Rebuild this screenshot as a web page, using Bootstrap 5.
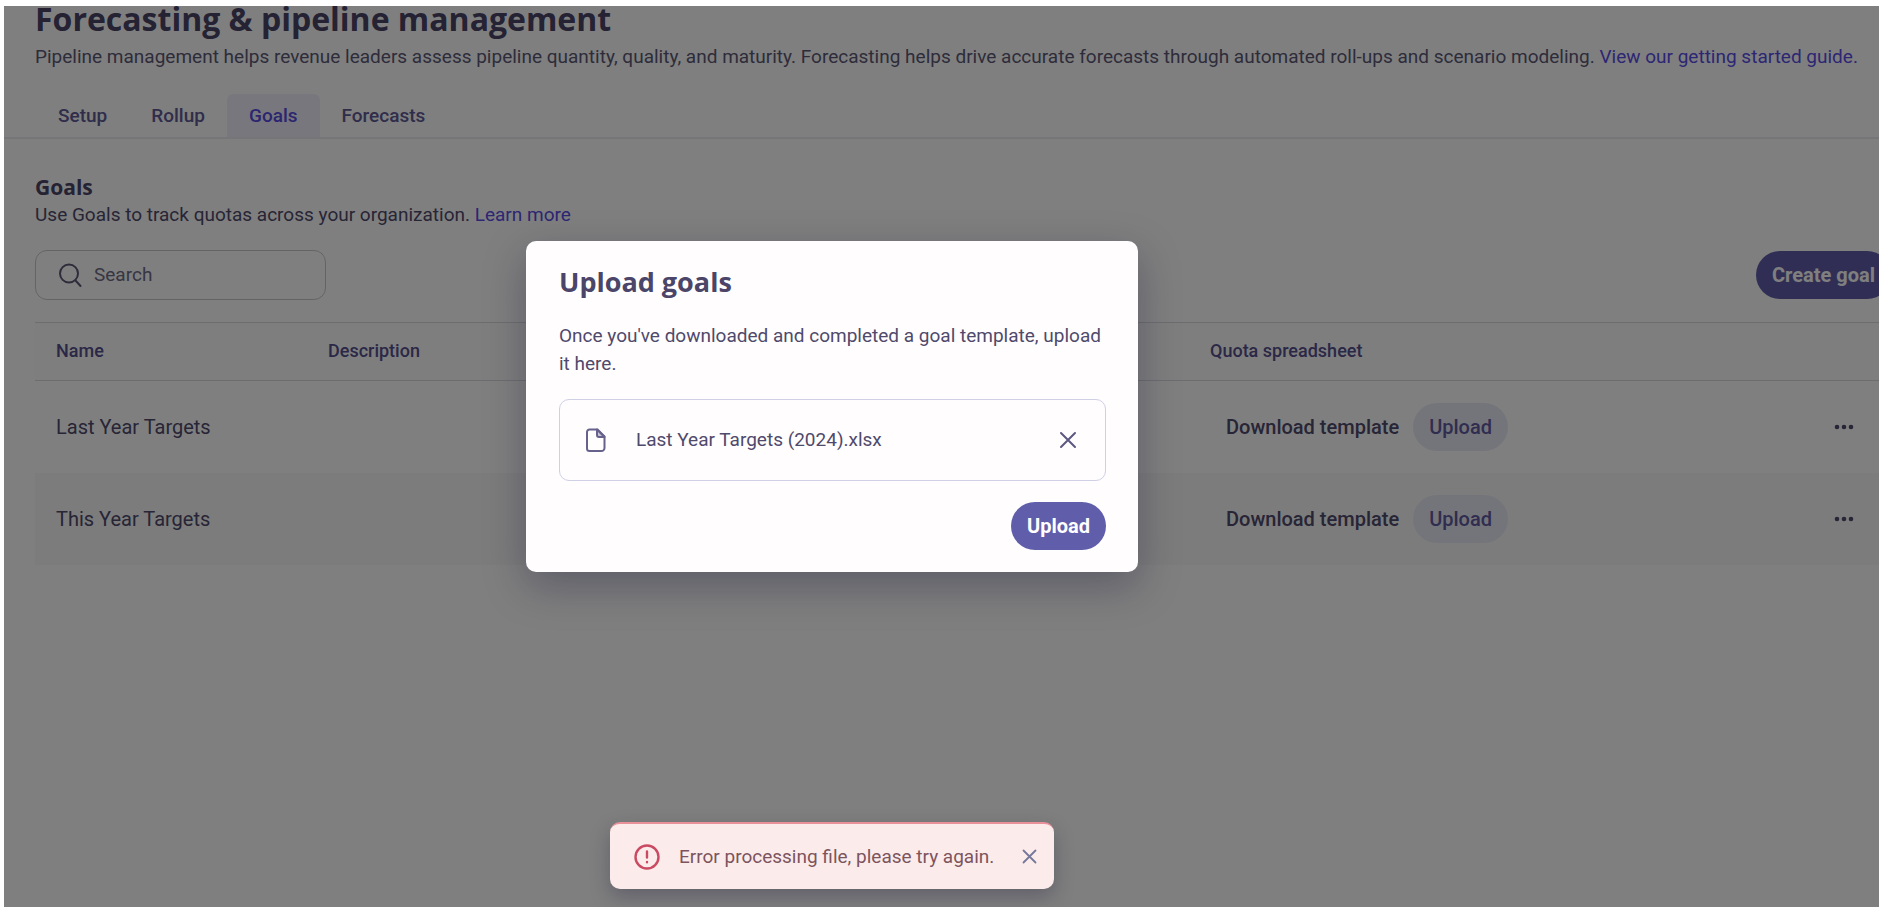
<!DOCTYPE html>
<html lang="en">
<head>
<meta charset="utf-8">
<meta name="viewport" content="width=device-width, initial-scale=1">
<title>Forecasting &amp; pipeline management</title>
<link href="https://cdn.jsdelivr.net/npm/bootstrap@5.3.0/dist/css/bootstrap.min.css" rel="stylesheet">
<style>
  :root { --ink: #4f4a6c; --brand: #605daa; --link: #5a4de8; }
  body { font-family: Roboto, "Liberation Sans", sans-serif; font-size: 19px; line-height: 28px; color: var(--ink); background: #fff; padding: 6px 3px 3px 4px; }
  h1, h2, h3 { font-family: "Open Sans", "Noto Sans", sans-serif; font-weight: 700; color: #4a4569; }
  a { color: var(--link); text-decoration: none; }
  .app-frame { background: #fff; }
  /* the page is a little wider than the visible frame */
  .app-canvas { width: calc(100% + 12px); }
  .gutter { padding-left: 31px; }
  .page-title { font-size: 32px; line-height: 25px; margin-bottom: 12px; }
  .page-lead { color: #5c5976; margin-bottom: 23px; }
  .tabs-bar { border-bottom: 2px solid #eceaf0; padding-left: 32px; }
  .tabs-bar .nav-link { font-size: 19px; line-height: 27px; font-weight: 500; color: #605a96; padding: 8px 22px; border-radius: 6px 6px 0 0; }
  .tabs-bar .nav-link.active { color: #594be0; background: #f1effc; }
  .goals-panel { padding-top: 34px; }
  .section-title { font-size: 21px; line-height: 28px; }
  .toolbar { margin: 21px 0 22px; }
  .search-box { width: 291px; border: 1px solid #c9c8cf; border-radius: 12px; padding: 0 21px; height: 50px; gap: 11px; }
  .search-box input { font-size: 19px; color: var(--ink); background: transparent; }
  .search-box input::placeholder { color: #6f6c86; opacity: 1; }
  .pill { font-size: 20px; line-height: 28px; font-weight: 500; border: 0; border-radius: 24px; padding: 10px 16px; }
  .pill-solid { background: var(--brand); color: #fff; font-weight: 700; }
  .pill-solid:hover { background: #524f98; color: #fff; }
  .pill-soft { background: #e9eaf5; color: #605aa0; }
  .goal-table { table-layout: fixed; --bs-table-bg: transparent; }
  .goal-table th { font-size: 18px; font-weight: 500; color: #57508f; padding: 14px 21px 15px; background: #fdfdfd; border-top: 1px solid #dbdae0; border-bottom: 1px solid #dbdae0; }
  .goal-table td { font-size: 20px; color: var(--ink); padding: 22px 21px; border: 0; }
  .goal-table tbody tr:nth-child(even) td { background: #f8f8f8; }
  .col-name { width: 272px; } .col-quota { width: 430px; } .col-menu { width: 272px; } .col-text { width: 441px; }
  .quota-actions { gap: 14px; }
  .plain-btn { background: none; border: 0; padding: 0; color: inherit; font-weight: 500; line-height: 28px; }
  .dim { background: rgba(0, 0, 0, .5); }
  .layer { padding-right: 219px; }
  .upload-dialog { width: 612px; margin-top: 235px; background: #fffdfd; border-radius: 10px; padding: 25px 32px 22px 33px; box-shadow: 0 14px 40px rgba(30, 28, 60, .35); }
  .dialog-title { font-size: 27px; line-height: 32px; }
  .dialog-text { margin: 24px 0 21px; }
  .file-box { border: 1px solid #cfd0e6; border-radius: 10px; height: 82px; padding: 0 28px 0 24px; gap: 28px; }
  .dialog-actions { margin-top: 21px; }
  .error-toast { width: 444px; height: 67px; margin-bottom: 18px; padding: 0 17px 0 24px; gap: 19px; background: #fbeceb; color: #7d545e; border-top: 2px solid #e8919a; border-radius: 10px; box-shadow: 0 8px 20px rgba(30, 28, 60, .3); }
</style>
</head>
<body class="min-vh-100 d-flex">
<div class="app-frame position-relative overflow-hidden flex-grow-1">
  <div class="app-canvas">
    <header class="gutter">
      <h1 class="page-title">Forecasting &amp; pipeline management</h1>
      <p class="page-lead text-nowrap">Pipeline management helps revenue leaders assess pipeline quantity, quality, and maturity. Forecasting helps drive accurate forecasts through automated roll-ups and scenario modeling. <a href="#">View our getting started guide.</a></p>
    </header>
    <nav class="tabs-bar nav" aria-label="Sections">
      <a class="nav-link" href="#">Setup</a>
      <a class="nav-link" href="#">Rollup</a>
      <a class="nav-link active" href="#" aria-current="page">Goals</a>
      <a class="nav-link" href="#">Forecasts</a>
    </nav>
    <main class="gutter goals-panel">
      <h2 class="section-title mb-0">Goals</h2>
      <p class="mb-0">Use Goals to track quotas across your organization. <a href="#">Learn more</a></p>
      <div class="toolbar d-flex justify-content-between align-items-center">
        <label class="search-box d-flex align-items-center">
          <svg width="26" height="26" viewBox="0 0 26 26" class="flex-shrink-0" fill="none" stroke="#5c5976" stroke-width="2" stroke-linecap="round" aria-hidden="true"><circle cx="12" cy="11.500" r="9"/><path d="M18.500 18.500l5 5.500"/></svg>
          <input type="search" class="form-control border-0 shadow-none p-0" placeholder="Search" aria-label="Search goals">
        </label>
        <button type="button" class="btn pill pill-solid">Create goal</button>
      </div>
      <table class="table goal-table mb-0 align-middle">
        <colgroup><col class="col-name"><col class="col-text"><col><col class="col-quota"><col class="col-menu"></colgroup>
        <thead>
          <tr><th scope="col">Name</th><th scope="col">Description</th><th></th><th scope="col">Quota spreadsheet</th><th></th></tr>
        </thead>
        <tbody>
          <tr>
            <td>Last Year Targets</td><td></td><td></td>
            <td><div class="quota-actions d-flex align-items-center ps-3"><button type="button" class="plain-btn">Download template</button><button type="button" class="btn pill pill-soft">Upload</button></div></td>
            <td><button type="button" class="plain-btn d-flex ms-auto" aria-label="More actions"><svg width="36" height="6" viewBox="0 0 36 6" fill="currentColor"><circle cx="3" cy="3" r="2.300"/><circle cx="10" cy="3" r="2.300"/><circle cx="17" cy="3" r="2.300"/></svg></button></td>
          </tr>
          <tr>
            <td>This Year Targets</td><td></td><td></td>
            <td><div class="quota-actions d-flex align-items-center ps-3"><button type="button" class="plain-btn">Download template</button><button type="button" class="btn pill pill-soft">Upload</button></div></td>
            <td><button type="button" class="plain-btn d-flex ms-auto" aria-label="More actions"><svg width="36" height="6" viewBox="0 0 36 6" fill="currentColor"><circle cx="3" cy="3" r="2.300"/><circle cx="10" cy="3" r="2.300"/><circle cx="17" cy="3" r="2.300"/></svg></button></td>
          </tr>
        </tbody>
      </table>
    </main>
  </div>

  <div class="dim layer position-absolute top-0 start-0 w-100 h-100 d-flex flex-column align-items-center justify-content-between">
    <section class="upload-dialog" role="dialog" aria-modal="true" aria-labelledby="dlgTitle">
      <h2 class="dialog-title mb-0" id="dlgTitle">Upload goals</h2>
      <p class="dialog-text">Once you've downloaded and completed a goal template, upload it here.</p>
      <div class="file-box d-flex align-items-center">
        <svg width="24" height="28" viewBox="0 0 24 28" fill="none" stroke="#66628c" stroke-width="2" stroke-linejoin="round" aria-hidden="true"><path d="M5.500 3.500h8l7 7v11.500a3 3 0 0 1-3 3h-12a2.500 2.500 0 0 1-2.500-2.500v-16.500a2.500 2.500 0 0 1 2.500-2.500z"/><path d="M13 3.500v5.500a2 2 0 0 0 2 2h5.500z" fill="#66628c" fill-opacity=".35"/></svg>
        <span class="flex-grow-1">Last Year Targets (2024).xlsx</span>
        <button type="button" class="plain-btn d-flex" aria-label="Remove file"><svg width="18" height="18" viewBox="0 0 18 18" fill="none" stroke="#5c5880" stroke-width="2" stroke-linecap="round"><path d="M2 2l14 14M16 2L2 16"/></svg></button>
      </div>
      <div class="dialog-actions d-flex justify-content-end"><button type="button" class="btn pill pill-solid">Upload</button></div>
    </section>
    <div class="error-toast d-flex align-items-center" role="alert">
      <svg width="26" height="26" viewBox="0 0 26 26" fill="none" stroke="#c94a62" stroke-width="2.400" stroke-linecap="round" aria-hidden="true"><circle cx="13" cy="13" r="11.500"/><path d="M13 7.500v6M13 18v.2"/></svg>
      <span class="flex-grow-1">Error processing file, please try again.</span>
      <button type="button" class="plain-btn d-flex" aria-label="Dismiss"><svg width="15" height="15" viewBox="0 0 15 15" fill="none" stroke="#74789a" stroke-width="1.800" stroke-linecap="round"><path d="M1.500 1.500l12 12M13.500 1.500l-12 12"/></svg></button>
    </div>
  </div>
</div>
<script src="https://cdn.jsdelivr.net/npm/bootstrap@5.3.0/dist/js/bootstrap.bundle.min.js"></script>
</body>
</html>
